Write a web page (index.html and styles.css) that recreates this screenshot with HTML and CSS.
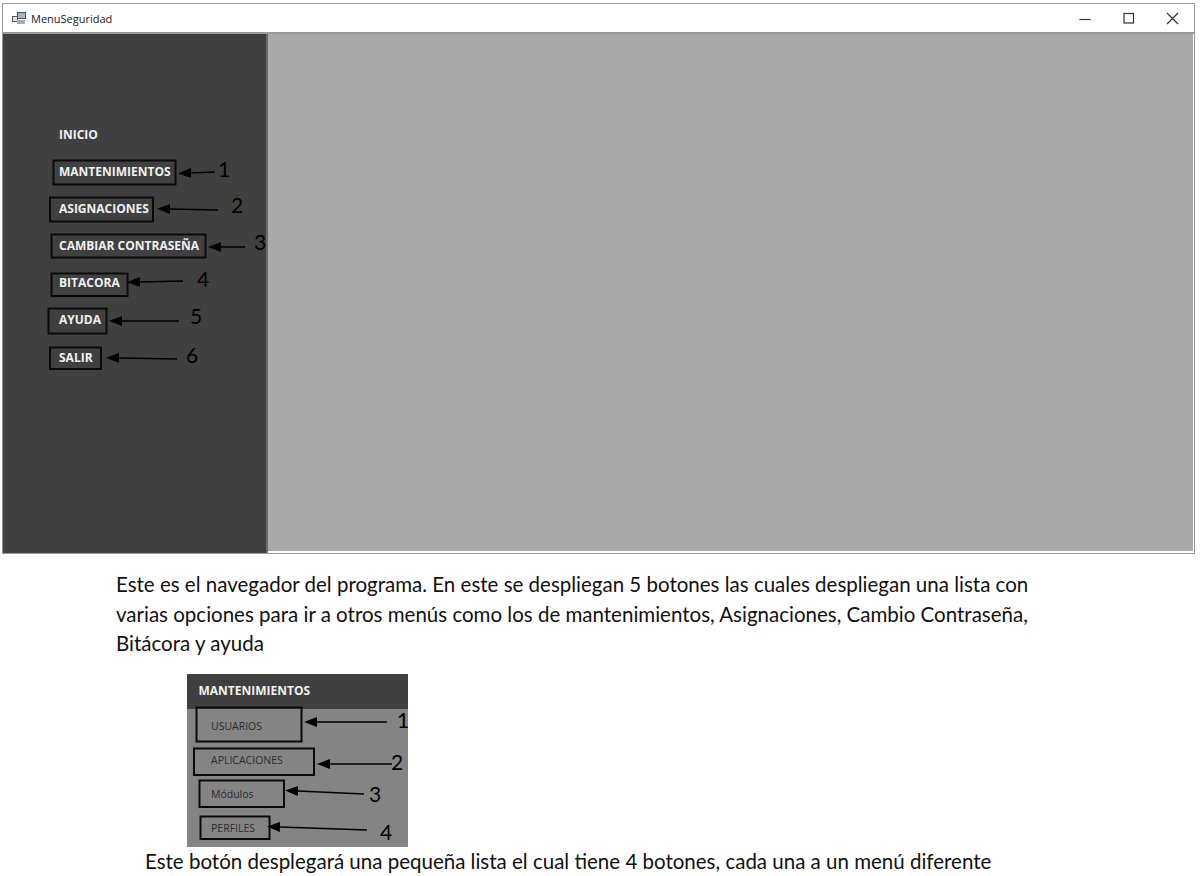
FILE: index.html
```html
<!DOCTYPE html>
<html lang="es">
<head>
    <meta charset="utf-8">
    <title>MenuSeguridad</title>
    <link rel="stylesheet" href="styles.css">
</head>
<body>
    <div class="window">
        <div class="titlebar">
            <svg class="app-icon" width="14" height="14" viewBox="0 0 14 14">
                <rect x="0.5" y="5.5" width="5" height="5" fill="#dfe6ee" stroke="#555"/>
                <rect x="5.5" y="1.5" width="8" height="6" fill="#9db6d2" stroke="#555"/>
                <rect x="5" y="9" width="8" height="4" fill="#aaa"/>
            </svg>
            <span class="app-name">MenuSeguridad</span>
            <div class="controls">
                <svg width="150" height="28" viewBox="0 0 150 28" fill="none" stroke="#333" stroke-width="1.2">
                    <path d="M35.5 15.5h11"/>
                    <rect x="80" y="9.5" width="9.5" height="9.5"/>
                    <path d="M123 9l11 11M134 9l-11 11"/>
                </svg>
            </div>
        </div>
        <div class="panes">
            <nav class="sidebar">
                <span class="menu-item">INICIO</span>
                <span class="menu-item">MANTENIMIENTOS</span>
                <span class="menu-item">ASIGNACIONES</span>
                <span class="menu-item">CAMBIAR CONTRASEÑA</span>
                <span class="menu-item">BITACORA</span>
                <span class="menu-item">AYUDA</span>
                <span class="menu-item">SALIR</span>
            </nav>
            <div class="content"></div>
        </div>
    </div>

    <p class="intro">Este es el navegador del programa. En este se despliegan 5 botones las cuales despliegan una lista con<br>varias opciones para ir a otros menús como los de mantenimientos, Asignaciones, Cambio Contraseña,<br>Bitácora y ayuda</p>

    <div class="submenu">
        <div class="submenu-head">MANTENIMIENTOS</div>
        <div class="submenu-list">
            <span class="sub-item">USUARIOS</span>
            <span class="sub-item">APLICACIONES</span>
            <span class="sub-item">Módulos</span>
            <span class="sub-item">PERFILES</span>
        </div>
    </div>

    <p class="outro">Este botón desplegará una pequeña lista el cual tiene 4 botones, cada una a un menú diferente</p>

    <!-- marcas dibujadas encima de las capturas -->
    <svg class="notes" width="1200" height="876" viewBox="0 0 1200 876">
        <defs>
            <marker id="head" markerWidth="14" markerHeight="10" refX="0" refY="5" orient="auto" markerUnits="userSpaceOnUse">
                <path d="M13 5L0 0V10Z" fill="#000"/>
            </marker>
        </defs>
        <g class="box">
            <rect x="53.5" y="160.5" width="122" height="24"/>
            <rect x="50" y="197.5" width="103" height="24"/>
            <rect x="51.5" y="234.5" width="154" height="23"/>
            <rect x="51.5" y="273.5" width="76" height="22.5"/>
            <rect x="48.5" y="308.5" width="58" height="25"/>
            <rect x="50" y="347.5" width="51" height="21.5"/>
            <rect x="196.5" y="707.5" width="105" height="34"/>
            <rect x="194" y="748.5" width="120" height="26.5"/>
            <rect x="199.5" y="780.5" width="84.5" height="26.5"/>
            <rect x="200.5" y="816.5" width="69" height="22.5"/>
        </g>
        <g class="arrow">
            <path d="M215 172L191 173"/>
            <path d="M218 210L170 209"/>
            <path d="M245 247L221 247"/>
            <path d="M183 281L140 282"/>
            <path d="M179 321L122 321"/>
            <path d="M177 359L119 358"/>
            <path d="M387 722L317 722"/>
            <path d="M392 764L330 764"/>
            <path d="M364 794L298 791"/>
            <path d="M367 830L280 827"/>
        </g>
        <g class="num">
            <text x="224" y="177">1</text>
            <text x="237" y="213">2</text>
            <text x="260" y="250">3</text>
            <text x="203" y="287">4</text>
            <text x="196" y="324">5</text>
            <text x="192" y="363">6</text>
            <text x="403" y="728">1</text>
            <text x="397" y="770">2</text>
            <text x="375" y="802">3</text>
            <text x="386" y="840">4</text>
        </g>
    </svg>
</body>
</html>
```

FILE: styles.css
```css
body {
    margin: 0;
    width: 1200px;
    height: 876px;
    background: #fff;
    font-family: "Lato", "Liberation Sans", sans-serif;
    color: #111;
    overflow: hidden;
    position: relative;
}

.window {
    margin: 3px 0 0 2px;
    width: 1193px;
    height: 551px;
    box-sizing: border-box;
    border: 1px solid #999;
    display: flex;
    flex-direction: column;
}

.titlebar {
    height: 28px;
    display: flex;
    align-items: center;
    padding-left: 9px;
    border-bottom: 2px solid #999;
    background: #fff;
    flex: none;
}

.app-icon {
    margin-right: 5px;
}

.app-name {
    font-family: "Open Sans", sans-serif;
    font-size: 11px;
    color: #222;
}

.controls {
    margin-left: auto;
    height: 28px;
}

.panes {
    flex: 1;
    display: flex;
    min-height: 0;
}

.sidebar {
    width: 265px;
    background: #404040;
    border-right: 2px solid #6b6b6b;
    padding-top: 93px;
    padding-left: 56px;
    box-sizing: border-box;
    display: flex;
    flex-direction: column;
    gap: 21.1px;
}

.menu-item {
    font-family: "Open Sans", sans-serif;
    font-weight: 700;
    font-size: 12px;
    line-height: 16px;
    color: #f0f0f0;
}

.content {
    flex: 1;
    background: #a9a9a9;
    border: 1px solid #fff;
    border-width: 0 1px 2px 0;
}

.intro {
    margin: 16px 0 0 116px;
    font-size: 20.5px;
    line-height: 29.6px;
}

.submenu {
    margin: 15px 0 0 187px;
    width: 221px;
    height: 173px;
    background: #848484;
}

.submenu-head {
    height: 35px;
    line-height: 34px;
    padding-left: 11.5px;
    background: #404040;
    color: #f0f0f0;
    font-family: "Open Sans", sans-serif;
    font-weight: 700;
    font-size: 12px;
}

.submenu-list {
    padding: 10px 0 0 24px;
    display: flex;
    flex-direction: column;
    gap: 20px;
}

.sub-item {
    font-family: "Open Sans", sans-serif;
    font-size: 10.5px;
    line-height: 14px;
    color: #2c2c2c;
}

.outro {
    margin: 0 0 0 145px;
    font-size: 20.5px;
    line-height: 28px;
}

/* anotaciones sobre la captura */
.notes {
    position: absolute;
    left: 0;
    top: 0;
}

.box rect {
    fill: none;
    stroke: #0a0a0a;
    stroke-width: 2;
}

.arrow path {
    fill: none;
    stroke: #000;
    stroke-width: 1.6;
    marker-end: url(#head);
}

.num text {
    font-family: "Lato", sans-serif;
    font-size: 21px;
    fill: #000;
    text-anchor: middle;
}
```
